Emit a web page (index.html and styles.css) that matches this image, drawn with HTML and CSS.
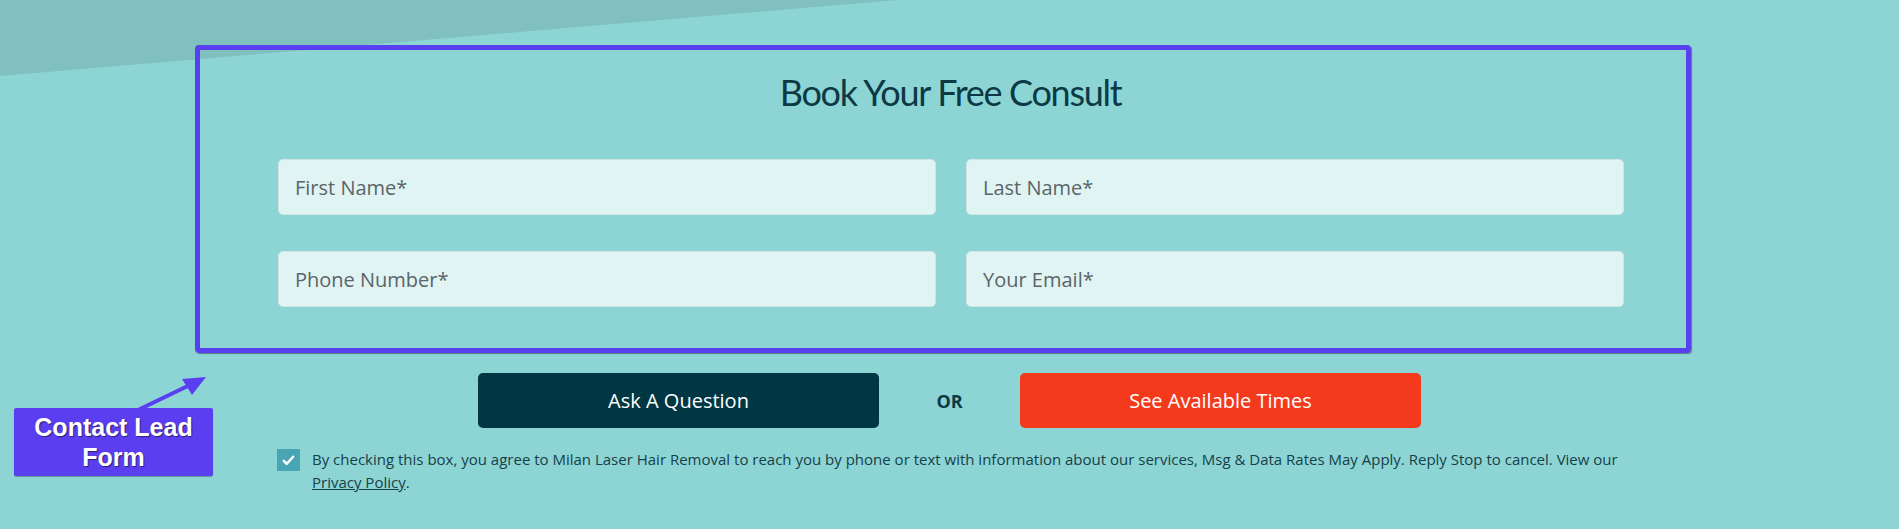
FILE: index.html
```html
<!DOCTYPE html>
<html lang="en">
<head>
<meta charset="utf-8">
<title>Book Your Free Consult</title>
<link rel="stylesheet" href="styles.css">
</head>
<body>
<div class="page">
  <div class="bg-shape"></div>
  <section class="consult">
    <div class="form-box">
      <div class="form-inner">
        <h2 class="title">Book Your Free Consult</h2>
        <div class="fields">
          <div class="field">First Name*</div>
          <div class="field">Last Name*</div>
          <div class="field">Phone Number*</div>
          <div class="field">Your Email*</div>
        </div>
      </div>
    </div>
    <div class="actions">
      <button class="btn btn-dark">Ask A Question</button>
      <span class="or">OR</span>
      <button class="btn btn-red">See Available Times</button>
    </div>
    <div class="consent">
      <span class="check">
        <svg viewBox="0 0 24 24" width="15" height="15"><path d="M4.5 12.5l4.5 4.8L19.5 6" fill="none" stroke="#fff" stroke-width="4" stroke-linecap="round" stroke-linejoin="round"/></svg>
      </span>
      <p class="consent-text">By checking this box, you agree to Milan Laser Hair Removal to reach you by phone or text with information about our services, Msg &amp; Data Rates May Apply. Reply Stop to cancel. View our <a href="#">Privacy Policy</a>.</p>
    </div>
  </section>

  <svg class="arrow" width="80" height="40" viewBox="0 0 80 40">
    <line x1="4" y1="35" x2="60" y2="8" stroke="#5a3ff0" stroke-width="4"/>
    <polygon points="72,2 48,4 58,20" fill="#5a3ff0"/>
  </svg>
  <div class="callout">Contact Lead<br>Form</div>
</div>
</body>
</html>
```

FILE: styles.css
```css
* { box-sizing: border-box; }
html, body { margin: 0; padding: 0; }
body {
  background: #8dd5d5;
  font-family: "Open Sans", "Liberation Sans", sans-serif;
  width: 1899px;
  height: 529px;
  overflow: hidden;
}
.page {
  position: relative;
  width: 1899px;
  height: 529px;
  padding-top: 45px;
}
.bg-shape {
  position: absolute;
  left: 0;
  top: 0;
  width: 897px;
  height: 76px;
  background: #80c0be;
  clip-path: polygon(0 0, 100% 0, 0 100%);
  z-index: 0;
}
.consult {
  position: relative;
  z-index: 1;
}
.form-box {
  margin-left: 195px;
  width: 1496px;
  height: 308px;
  border: 5px solid #5a3ff0;
  border-radius: 4px;
  box-shadow: 1px 1px 1px rgba(40, 60, 60, 0.55);
}
.form-inner {
  padding: 17px 63px 0 78px;
}
.title {
  margin: 0;
  text-align: center;
  font-family: Lato, "Open Sans", sans-serif;
  font-weight: 400;
  font-size: 36px;
  letter-spacing: -1.3px;
  line-height: 50px;
  color: #0b3a45;
}
.fields {
  margin-top: 42px;
  display: grid;
  grid-template-columns: 658px 658px;
  column-gap: 30px;
  row-gap: 36px;
}
.field {
  height: 56px;
  background: #e0f4f3;
  border: 1px solid #cfe5e5;
  border-radius: 5px;
  padding: 0 16px;
  display: flex;
  align-items: center;
  font-size: 20px;
  color: #5b6468;
}
.actions {
  margin-top: 20px;
  display: flex;
  justify-content: center;
  align-items: center;
}
.btn {
  width: 401px;
  height: 55px;
  border: none;
  border-radius: 5px;
  font-family: "Open Sans", sans-serif;
  font-size: 20px;
  color: #fff;
  padding: 0;
}
.btn-dark { background: #013643; }
.btn-red { background: #f33a1c; }
.or {
  width: 141px;
  text-align: center;
  font-weight: 700;
  font-size: 18px;
  color: #0b3a45;
}
.consent {
  margin: 21px 0 0 277px;
  width: 1350px;
  display: flex;
  align-items: flex-start;
}
.check {
  flex: none;
  width: 23px;
  height: 22px;
  background: #49a4b4;
  display: flex;
  align-items: center;
  justify-content: center;
  margin-right: 12px;
}
.consent-text {
  margin: -1px 0 0;
  font-size: 15px;
  line-height: 23px;
  color: #173f48;
}
.consent-text a {
  color: #173f48;
  text-decoration: underline;
}
.arrow {
  position: absolute;
  left: 134px;
  top: 375px;
}
.callout {
  position: absolute;
  left: 14px;
  top: 408px;
  width: 199px;
  height: 68px;
  background: #5b3ef0;
  border-radius: 2px;
  box-shadow: 0 1px 1px rgba(0,0,0,0.3);
  color: #fff;
  font-family: "Liberation Sans", Arial, sans-serif;
  font-weight: 700;
  font-size: 25px;
  line-height: 30px;
  text-align: center;
  padding-top: 4px;
  text-shadow: 1px 1px 1px rgba(0,0,0,0.5);
}
```
